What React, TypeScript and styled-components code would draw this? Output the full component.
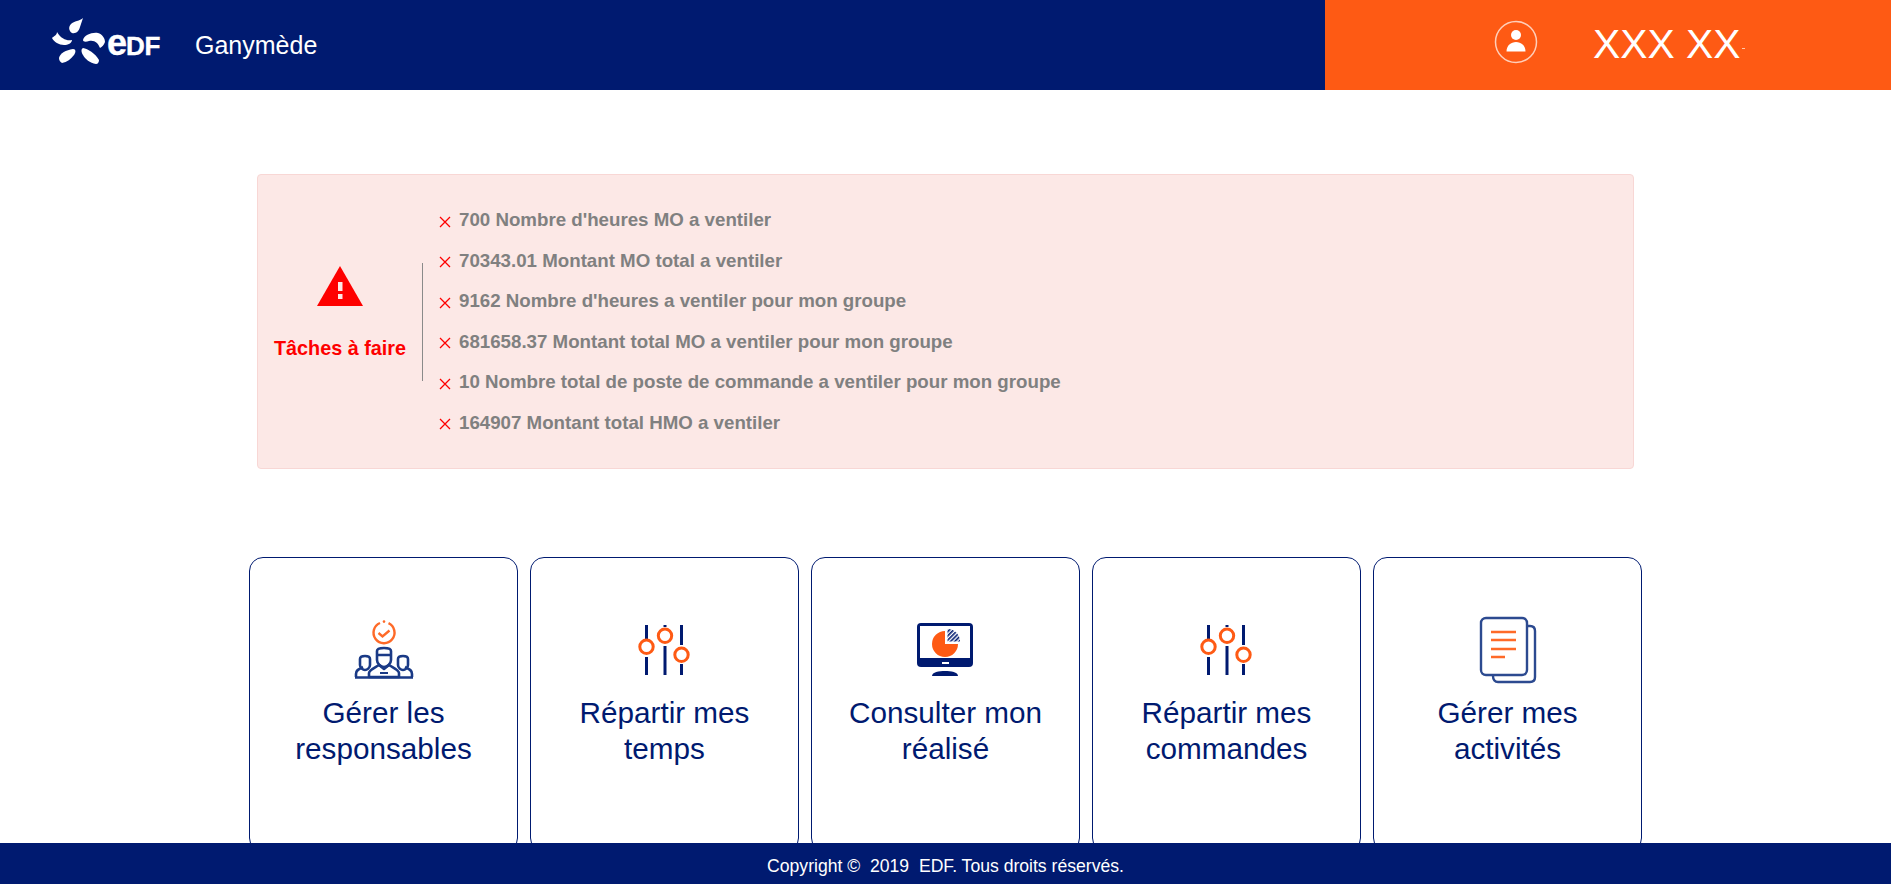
import React from "react";
import styled, { createGlobalStyle } from "styled-components";

const Global = createGlobalStyle`
  html, body { margin: 0; padding: 0; background: #fff; }
  body { font-family: "Liberation Sans", Arial, sans-serif; }
`;

const Page = styled.div`
  height: 884px;
  display: flex;
  flex-direction: column;
  overflow: hidden;
`;

const Header = styled.header`
  flex: 0 0 90px;
  display: flex;
  background: #001a70;
`;

const Brand = styled.div`
  flex: 0 0 1325px;
  display: flex;
  align-items: center;
  padding-left: 52px;
  box-sizing: border-box;
`;

const LogoMark = styled.div`
  display: flex;
  align-items: center;
  width: 143px;
  height: 46px;
  margin-top: -8px;
`;

const LogoWord = styled.span`
  font-weight: 700;
  font-size: 26px;
  letter-spacing: -0.3px;
  color: #fff;
  margin-left: 1px;
  margin-top: 10px;
  -webkit-text-stroke: 0.4px #fff;
  & > b { font-size: 36px; line-height: 24px; letter-spacing: -1px; }
`;

const AppName = styled.span`
  color: #fff;
  font-size: 25px;
`;

const UserBar = styled.div`
  flex: 1;
  display: flex;
  align-items: center;
  padding-left: 169px;
  background: #fe5a14;
`;

const UserAvatar = styled.div`
  display: flex;
  margin-top: -6px;
`;

const UserName = styled.span`
  color: #fff;
  font-size: 40.8px;
  margin-left: 55px;
  margin-top: -2px;
  white-space: nowrap;
  &::after {
    content: "";
    display: inline-block;
    width: 3px;
    height: 1px;
    margin-left: 2px;
    vertical-align: 9px;
    background: #ffc9a8;
  }
`;

const Main = styled.main`
  flex: 1;
  min-height: 0;
  overflow: hidden;
  display: flex;
  flex-direction: column;
  align-items: center;
  padding-top: 84px;
`;

const Alert = styled.section`
  flex: none;
  box-sizing: border-box;
  width: 1377px;
  height: 295px;
  display: flex;
  align-items: center;
  background: #fce8e6;
  border: 1px solid #f8d7d5;
  border-radius: 4px;
`;

const AlertLabel = styled.div`
  flex: 0 0 164px;
  display: flex;
  flex-direction: column;
  align-items: center;
  box-sizing: border-box;
  gap: 31px;
  margin-top: -17px;
`;

const AlertTitle = styled.div`
  color: #fe0000;
  font-size: 19.8px;
  font-weight: 700;
  white-space: nowrap;
`;

const Divider = styled.div`
  width: 1px;
  height: 118px;
  background: #8a8a8a;
`;

const TaskList = styled.ul`
  list-style: none;
  margin: 0;
  padding: 0 0 0 16px;
  display: flex;
  flex-direction: column;
`;

const Task = styled.li`
  height: 40.6px;
  display: flex;
  align-items: center;
  gap: 8px;
  color: #808080;
  font-size: 18.72px;
  font-weight: 700;
  white-space: nowrap;
`;

const Cards = styled.div`
  flex: none;
  display: grid;
  grid-template-columns: repeat(5, 269px);
  column-gap: 12px;
  margin-top: 88px;
`;

const Card = styled.a`
  box-sizing: border-box;
  height: 295px;
  border: 1px solid #001a70;
  border-radius: 14px;
  display: flex;
  flex-direction: column;
  align-items: center;
  padding-top: 60px;
  color: #001a70;
  text-align: center;
`;

const CardIcon = styled.div`
  height: 64px;
  display: flex;
  align-items: center;
  justify-content: center;
`;

const CardTitle = styled.div`
  font-size: 29.7px;
  line-height: 36px;
  margin-top: 13px;
`;

const Footer = styled.footer`
  flex: 0 0 41px;
  display: flex;
  align-items: center;
  justify-content: center;
  padding-top: 5px;
  box-sizing: border-box;
  background: #001a70;
  color: #fff;
  font-size: 17.6px;
  white-space: pre;
`;

const Petal = ({ d }: { d: string }) => <path d={d} fill="#fff" />;

const EdfLogo = () => (
  <LogoMark>
    <svg width="54" height="46" viewBox="0 0 54 46">
      <Petal d="M31 0C28 3 22 3 19 6C16 9 17 13 20 15C24 16 27 13 28 9C29 6 30 3 31 0Z" />
      <Petal d="M5 14C5 17 2 18 0 20C2 24 7 27 12 27C16 27 20 25 20 22C15 23 9 21 5 14Z" />
      <Petal d="M31 22C32 17 40 14 46 15C50 16 53 20 53 24C52 27 50 29 48 30C46 25 43 22 37 23C34 24 31 24 31 22Z" />
      <Petal d="M21 31C14 32 8 35 7 40C7 42 8 44 10 45C15 44 19 41 22 37C24 34 24 31 21 31Z" />
      <Petal d="M31 30C36 31 43 35 47 42C47 44 46 46 44 46C38 45 33 41 31 37C29 34 29 31 31 30Z" />
    </svg>
    <LogoWord><b>e</b>DF</LogoWord>
  </LogoMark>
);

const UserIcon = () => (
  <svg width="44" height="44" viewBox="0 0 44 44">
    <circle cx="22" cy="22" r="20.5" fill="none" stroke="#fff" strokeOpacity="0.7" strokeWidth="1.5" />
    <circle cx="22" cy="15" r="5" fill="#fff" />
    <path d="M12.5 31.5C12.5 25.5 17 22 22 22C27 22 31.5 25.5 31.5 31.5Z" fill="#fff" />
  </svg>
);

const WarningIcon = () => (
  <svg width="46" height="40" viewBox="0 0 46 40">
    <path d="M23 0L46 40H0Z" fill="#fe0000" />
    <rect x="21" y="16" width="4.5" height="9" fill="#fce8e6" />
    <rect x="21" y="28" width="4.5" height="5" fill="#fce8e6" />
  </svg>
);

const CrossIcon = () => (
  <svg width="12" height="12" viewBox="0 0 12 12" style={{ marginTop: 3 }}>
    <path d="M1 1L11 11M11 1L1 11" stroke="#fe0000" strokeWidth="1.3" />
  </svg>
);

const TeamIcon = () => (
  <svg width="60" height="60" viewBox="0 0 60 60">
    <g fill="none" stroke="#fe6a28" strokeWidth="2.4">
      <path d="M26 3A10.5 10.5 0 1 0 34.5 3.2" />
      <path d="M24.5 13L28.5 16.5L35.5 10.5" />
    </g>
    <circle cx="30" cy="1.6" r="1.3" fill="#fe6a28" />
    <g fill="none" stroke="#1a3a86" strokeWidth="2.6" strokeLinejoin="round">
      <path d="M2 57V54C2 50 5 49 9 47M58 57V54C58 50 55 49 51 47" />
      <path d="M6 39C6 35 16 35 16 39V45C16 48 13 50 11 50C9 50 6 48 6 45Z" />
      <path d="M44 39C44 35 54 35 54 39V45C54 48 51 50 49 50C47 50 44 48 44 45Z" />
      <path d="M23 31C23 27 37 27 37 31V40C37 44 33 47 30 47C27 47 23 44 23 40Z" />
      <path d="M15 57V53C15 50 20 48 25 45L30 49L35 45C40 48 45 50 45 53V57Z" />
      <path d="M1 57.5H59M23 35H37" />
    </g>
    <path d="M26 53H34" stroke="#1a3a86" strokeWidth="2" />
  </svg>
);

const SlidersIcon = () => (
  <svg width="56" height="52" viewBox="0 0 56 52">
    <g stroke="#001a70" strokeWidth="3">
      <path d="M9.5 1V15M9.5 33V51M28 1V3M28 22V51M44.5 1V21M44.5 40V51" />
    </g>
    <g fill="#fff" stroke="#fe5a14" strokeWidth="3">
      <circle cx="9.5" cy="22.7" r="6.7" />
      <circle cx="28" cy="11.7" r="6.7" />
      <circle cx="44.5" cy="30.7" r="6.7" />
    </g>
  </svg>
);

const MonitorIcon = () => (
  <svg width="58" height="54" viewBox="0 0 58 54">
    <defs>
      <pattern id="hatch" width="3" height="3" patternUnits="userSpaceOnUse" patternTransform="rotate(45)">
        <rect width="3" height="3" fill="#fff" />
        <rect width="1.6" height="3" fill="#001a70" />
      </pattern>
    </defs>
    <rect x="0" y="0" width="56" height="44" rx="4" fill="#001a70" />
    <rect x="3" y="3" width="50" height="32" fill="#fff" />
    <rect x="25" y="39" width="7" height="2" fill="#fff" />
    <path d="M15 53C15 49 22 48 28 48C34 48 41 49 41 53Z" fill="#001a70" />
    <path d="M28 8A13 13 0 1 0 41 21H28Z" fill="#fe5a14" />
    <path d="M30.5 6C38 6 43 12 43 18.5H30.5Z" fill="url(#hatch)" />
  </svg>
);

const DocsIcon = () => (
  <svg width="58" height="68" viewBox="0 0 58 68">
    <path d="M48 10H51C54 10 56 12 56 15V61C56 64 54 66 51 66H19C16 66 14 64 14 60V58" fill="none" stroke="#2c4a90" strokeWidth="2.4" />
    <rect x="2" y="2" width="46" height="57" rx="5" fill="#fff" stroke="#2c4a90" strokeWidth="2.4" />
    <path d="M12 16H37M12 24H37M12 33H37M12 41H26" stroke="#fe6a28" strokeWidth="2.4" />
  </svg>
);

const tasks = [
  "700 Nombre d'heures MO a ventiler",
  "70343.01 Montant MO total a ventiler",
  "9162 Nombre d'heures a ventiler pour mon groupe",
  "681658.37 Montant total MO a ventiler pour mon groupe",
  "10 Nombre total de poste de commande a ventiler pour mon groupe",
  "164907 Montant total HMO a ventiler",
];

const cards = [
  { icon: <TeamIcon />, lines: ["Gérer les", "responsables"] },
  { icon: <SlidersIcon />, lines: ["Répartir mes", "temps"] },
  { icon: <MonitorIcon />, lines: ["Consulter mon", "réalisé"] },
  { icon: <SlidersIcon />, lines: ["Répartir mes", "commandes"] },
  { icon: <DocsIcon />, lines: ["Gérer mes", "activités"] },
];

export default function App() {
  return (
    <Page>
      <Global />
      <Header>
        <Brand>
          <EdfLogo />
          <AppName>Ganymède</AppName>
        </Brand>
        <UserBar>
          <UserAvatar>
            <UserIcon />
          </UserAvatar>
          <UserName>XXX XX</UserName>
        </UserBar>
      </Header>
      <Main>
        <Alert>
          <AlertLabel>
            <WarningIcon />
            <AlertTitle>Tâches à faire</AlertTitle>
          </AlertLabel>
          <Divider />
          <TaskList>
            {tasks.map((t) => (
              <Task key={t}>
                <CrossIcon />
                {t}
              </Task>
            ))}
          </TaskList>
        </Alert>
        <Cards>
          {cards.map((c) => (
            <Card key={c.lines.join(" ")}>
              <CardIcon>{c.icon}</CardIcon>
              <CardTitle>
                {c.lines[0]}
                <br />
                {c.lines[1]}
              </CardTitle>
            </Card>
          ))}
        </Cards>
      </Main>
      <Footer>Copyright ©  2019  EDF. Tous droits réservés.</Footer>
    </Page>
  );
}
